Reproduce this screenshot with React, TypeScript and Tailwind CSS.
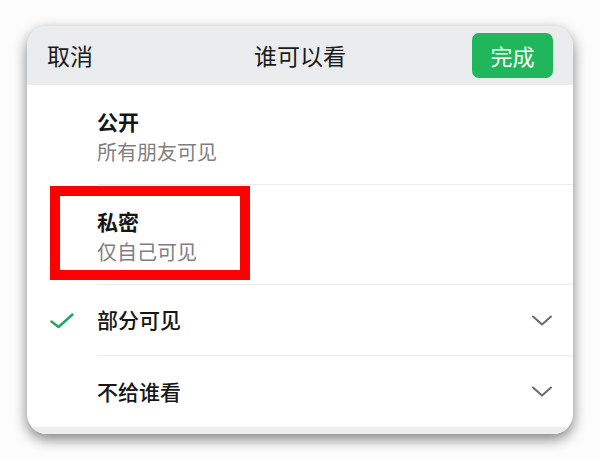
const font = { fontFamily: '"Noto Sans CJK SC", "Noto Sans", sans-serif' }

function Chevron() {
  return (
    <svg width="20" height="11" viewBox="0 0 20 11" fill="none">
      <path d="M1 1.5 L10 9.5 L19 1.5" stroke="#6b6b6b" strokeWidth="2" strokeLinecap="round" strokeLinejoin="round" />
    </svg>
  )
}

function Check() {
  return (
    <svg width="24" height="16" viewBox="0 0 24 16" fill="none">
      <path d="M1.5 8.5 L8.5 14 L22.5 1.5" stroke="#21a85b" strokeWidth="2.5" strokeLinecap="round" strokeLinejoin="round" />
    </svg>
  )
}

export default function App() {
  return (
    <div className="w-[600px] h-[461px] bg-[#fdfdfd] pt-[26px] px-[27px] overflow-hidden" style={font}>
      <div className="relative h-[408px] bg-white rounded-[20px] overflow-hidden shadow-[0_5px_14px_rgba(0,0,0,0.5)] flex flex-col">
        {/* header */}
        <div className="h-[59px] bg-[#ebecee] flex items-center justify-between pl-[20px] pr-[20px]">
          <span className="text-[23px] text-[#1a1a1a] w-[81px]">取消</span>
          <span className="text-[23px] text-[#1a1a1a]">谁可以看</span>
          <button className="w-[81px] h-[45px] rounded-[7px] bg-[#1fb65c] text-white text-[22px]">完成</button>
        </div>

        {/* options */}
        <div className="flex flex-col pl-[70px]">
          <div className="h-[100px] border-b border-[#ececec] flex flex-col pt-[22px]">
            <span className="text-[21px] leading-[28px] font-semibold text-[#161616]">公开</span>
            <span className="text-[20px] leading-[34px] text-[#7f7f7f]">所有朋友可见</span>
          </div>
          <div className="h-[100px] border-b border-[#ececec] flex flex-col pt-[22px]">
            <span className="text-[21px] leading-[28px] font-semibold text-[#161616]">私密</span>
            <span className="text-[20px] leading-[34px] text-[#7f7f7f]">仅自己可见</span>
          </div>
          <div className="relative h-[71px] border-b border-[#ececec] flex items-center justify-between pr-[21px]">
            <div className="absolute left-[-47px] top-[28px]">
              <Check />
            </div>
            <span className="text-[21px] font-medium text-[#161616]">部分可见</span>
            <Chevron />
          </div>
          <div className="h-[71px] flex items-center justify-between pr-[21px]">
            <span className="text-[21px] font-medium text-[#161616]">不给谁看</span>
            <Chevron />
          </div>
        </div>
        <div className="flex-1 bg-[#eeeeee]" />

        {/* red annotation box */}
        <div className="absolute left-[23px] top-[160px] w-[200px] h-[94px] border-[10px] border-[#ff0000]" />
      </div>
    </div>
  )
}
